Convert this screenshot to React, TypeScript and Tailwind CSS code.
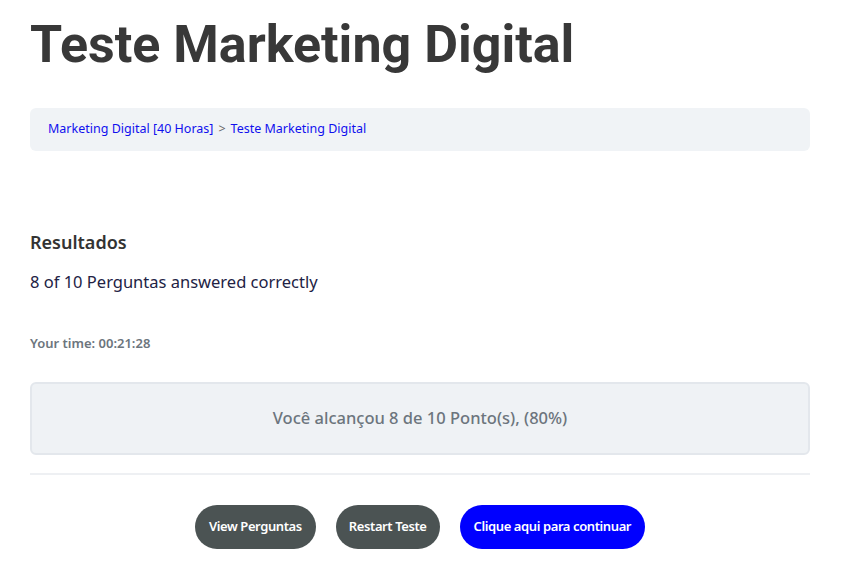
import React from "react";

export default function App() {
  const body = { fontFamily: '"Noto Sans", "Open Sans", sans-serif' };
  return (
    <div className="min-h-[585px] bg-white pl-[30px] pt-[12px]" style={body}>
      <div className="w-[780px]">
        <h1
          className="text-[52px] font-bold leading-[66px] text-[#383838]"
          style={{ fontFamily: "Roboto, sans-serif" }}
        >
          Teste Marketing Digital
        </h1>
        <div className="mt-[30px] flex h-[43px] items-center rounded-[6px] bg-[#f0f3f6] px-[18px] text-[12.5px]">
          <span className="text-[#1010ee]">Marketing Digital [40 Horas]</span>
          <span className="mx-[5px] text-[#666]">&gt;</span>
          <span className="text-[#1010ee]">Teste Marketing Digital</span>
        </div>
        <div className="mt-[79px] text-[18px] font-semibold leading-[24px] text-[#333]">Resultados</div>
        <div className="mt-[16px] text-[16.5px] leading-[24px] text-[#222244]">
          8 of 10 Perguntas answered correctly
        </div>
        <div className="mt-[40px] text-[13px] font-semibold leading-[18px] text-[#6c757d]">
          Your time: 00:21:28
        </div>
        <div className="mt-[30px] flex h-[73px] items-center justify-center rounded-[6px] border-2 border-[#e3e7ec] bg-[#eff2f5] text-[16.5px] font-medium text-[#6c757d]">
          Você alcançou 8 de 10 Ponto(s), (80%)
        </div>
        <div className="mt-[18px] h-[2px] bg-[#eef0f3]" />
        <div className="mt-[30px] flex justify-center gap-[20px] text-[13px] font-semibold tracking-[-0.4px] text-white">
          <button className="h-[44px] rounded-full bg-[#4b5353] px-[14px]">View Perguntas</button>
          <button className="h-[44px] rounded-full bg-[#4b5353] px-[13px]">Restart Teste</button>
          <button className="h-[44px] rounded-full bg-[#0000ff] px-[14px]">Clique aqui para continuar</button>
        </div>
      </div>
    </div>
  );
}
